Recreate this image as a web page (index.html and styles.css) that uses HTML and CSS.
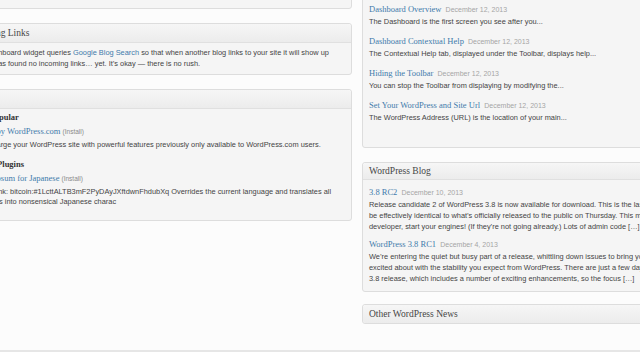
FILE: index.html
```html
<!DOCTYPE html>
<html lang="en">
<head>
  <meta charset="UTF-8" />
  <meta name="viewport" content="width=device-width, initial-scale=1.0"/>
  <title>Dashboard</title>
  <link rel="stylesheet" href="styles.css">
</head>
<body>
  <div id="dashboard">
    <div class="column column-left">
      <div class="postbox postbox-stub"></div>

      <div class="postbox">
        <h3 class="postbox-title">Incoming Links</h3>
        <div class="inside">
          <p class="text">This Dashboard widget queries <a href="#">Google Blog Search</a> so that when another blog links to your site it will show up here. It has found no incoming links&hellip; yet. It&#8217;s okay &#8212; there is no rush.</p>
        </div>
      </div>

      <div class="postbox">
        <h3 class="postbox-title">Plugins</h3>
        <div class="inside inside-plugins">
          <div class="plugin-group">
            <h4>Most Popular</h4>
            <div class="plugin-name"><a href="#">Jetpack by WordPress.com</a> <span class="install">(Install)</span></div>
            <p class="text">Supercharge your WordPress site with powerful features previously only available to WordPress.com users.</p>
          </div>
          <div class="plugin-group">
            <h4>Newest Plugins</h4>
            <div class="plugin-name"><a href="#">Lorem Ipsum for Japanese</a> <span class="install">(Install)</span></div>
            <p class="text">Donate link: bitcoin:#1LcttALTB3mF2PyDAyJXftdwnFhdubXq Overrides the current language and translates all messages into nonsensical Japanese charac</p>
          </div>
        </div>
      </div>
    </div>

    <div class="column column-right">
      <div class="postbox postbox-stub postbox-help">
        <div class="feed-item">
          <div class="feed-title"><a href="#">Dashboard Overview</a> <span class="date">December 12, 2013</span></div>
          <p class="text">The Dashboard is the first screen you see after you...</p>
        </div>
        <div class="feed-item">
          <div class="feed-title"><a href="#">Dashboard Contextual Help</a> <span class="date">December 12, 2013</span></div>
          <p class="text">The Contextual Help tab, displayed under the Toolbar, displays help...</p>
        </div>
        <div class="feed-item">
          <div class="feed-title"><a href="#">Hiding the Toolbar</a> <span class="date">December 12, 2013</span></div>
          <p class="text">You can stop the Toolbar from displaying by modifying the...</p>
        </div>
        <div class="feed-item">
          <div class="feed-title"><a href="#">Set Your WordPress and Site Url</a> <span class="date">December 12, 2013</span></div>
          <p class="text">The WordPress Address (URL) is the location of your main...</p>
        </div>
      </div>

      <div class="postbox postbox-blog">
        <h3 class="postbox-title">WordPress Blog</h3>
        <div class="inside inside-blog">
          <div class="blog-item">
            <div class="feed-title"><a href="#">3.8 RC2</a> <span class="date">December 10, 2013</span></div>
            <p class="text">Release candidate 2 of WordPress 3.8 is now available for download. This is the last pre-release, and we expect it to be effectively identical to what&#8217;s officially released to the public on Thursday. This means if you are a plugin or theme developer, start your engines! (If they&#8217;re not going already.) Lots of admin code [&hellip;]</p>
          </div>
          <div class="blog-item blog-item-narrow">
            <div class="feed-title"><a href="#">WordPress 3.8 RC1</a> <span class="date">December 4, 2013</span></div>
            <p class="text">We&#8217;re entering the quiet but busy part of a release, whittling down issues to bring you all the new stuff you&#8217;re excited about with the stability you expect from WordPress. There are just a few days until the &#8220;code freeze&#8221; on our 3.8 release, which includes a number of exciting enhancements, so the focus [&hellip;]</p>
          </div>
        </div>
      </div>

      <div class="postbox postbox-closed">
        <h3 class="postbox-title">Other WordPress News</h3>
      </div>
    </div>
  </div>

  <div id="footer"></div>
</body>
</html>
```

FILE: styles.css
```css
html, body {
  margin: 0;
  padding: 0;
}

body {
  width: 640px;
  height: 360px;
  overflow: hidden;
  background: #fcfcfc;
  font-family: "Liberation Sans", Arial, sans-serif;
  font-size: 7.4px;
  color: #444;
}

a {
  color: #3f7bab;
  text-decoration: none;
}

#dashboard {
  display: flex;
  gap: 10px;
  height: 380px;
  margin: -30px 0 0 -38px;
}

.column {
  flex: none;
}

.column-left {
  width: 390px;
}

.column-right {
  width: 404px;
}

.postbox {
  background: #f5f5f5;
  border: 1px solid #dddddd;
  border-radius: 3px;
  box-shadow: inset 0 1px 0 #fff;
  margin-bottom: 14px;
}

.postbox-stub {
  height: 37px;
}

.postbox-title {
  margin: 0;
  height: 18px;
  line-height: 18px;
  padding: 0 6px;
  font-family: "Liberation Serif", Georgia, serif;
  font-size: 9.5px;
  font-weight: normal;
  color: #464646;
  background: linear-gradient(to bottom, #f6f6f6, #ececec);
  border-bottom: 1px solid #e0e0e0;
  border-radius: 3px 3px 0 0;
}

.postbox-closed .postbox-title {
  border-bottom: none;
  border-radius: 3px;
}

.inside {
  padding: 5px 6px;
}

.text {
  margin: 0;
  line-height: 10.5px;
}

.inside-plugins {
  padding: 2px 6px 12px;
}

.plugin-group + .plugin-group {
  margin-top: 7px;
}

.plugin-group h4 {
  margin: 0;
  font-family: "Liberation Serif", Georgia, serif;
  font-size: 8.5px;
  line-height: 13px;
  color: #333;
}

.plugin-name {
  font-family: "Liberation Serif", Georgia, serif;
  font-size: 8.5px;
  line-height: 14px;
}

.install {
  font-family: "Liberation Sans", Arial, sans-serif;
  font-size: 6.5px;
  line-height: 1;
  color: #8a8a8a;
}

.plugin-group .text {
  margin-top: 2px;
}

/* help feed in the right column */
.postbox-help {
  height: auto;
  padding: 31px 6px 24px;
}

.feed-item + .feed-item {
  margin-top: 7px;
}

.feed-title {
  font-family: "Liberation Serif", Georgia, serif;
  font-size: 8.5px;
  line-height: 13px;
}

.feed-item .feed-title {
  line-height: 14px;
}

.feed-item .text {
  line-height: 11px;
}

.date {
  font-family: "Liberation Sans", Arial, sans-serif;
  font-size: 7px;
  line-height: 1;
  color: #a5a5a5;
  margin-left: 2px;
}

.postbox-blog {
  margin-bottom: 12px;
}

.postbox-blog .postbox-title {
  height: 16px;
  line-height: 17px;
}

.inside-blog {
  padding: 6px 6px 7px;
}

.blog-item .text {
  line-height: 11px;
}

.blog-item-narrow .text {
  max-width: 378px;
}

.blog-item + .blog-item {
  margin-top: 6px;
}

#footer {
  height: 10px;
  border-top: 2px solid #e6e6e6;
  background: #fff;
}
```
